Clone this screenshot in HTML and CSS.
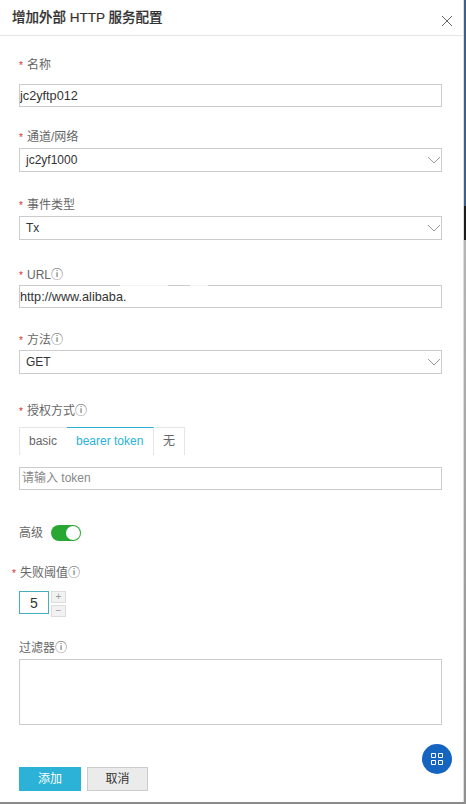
FILE: index.html
```html
<!DOCTYPE html>
<html lang="zh-CN">
<head>
  <meta charset="UTF-8">
  <title>增加外部 HTTP 服务配置</title>
  <link rel="stylesheet" href="styles.css">
</head>
<body>
  <div class="backdrop">
    <div class="drawer">
      <div class="drawer-header">
        <h2 class="heading">增加外部 HTTP 服务配置</h2>
        <svg class="close-icon" width="12" height="12" viewBox="0 0 12 12"><path d="M1 1l10 10M11 1L1 11" stroke="#666" fill="none"/></svg>
      </div>
      <form class="drawer-body">
        <label class="form-label name-label"><span class="req">*</span>名称</label>
        <input type="text" class="form-input" value="jc2yftp012">

        <label class="form-label channel-label"><span class="req">*</span>通道/网络</label>
        <div class="form-select">jc2yf1000<svg class="caret" width="14" height="8" viewBox="0 0 14 8"><path d="M1 1l6 6 6-6" stroke="#999" fill="none"/></svg></div>

        <label class="form-label event-label"><span class="req">*</span>事件类型</label>
        <div class="form-select">Tx<svg class="caret" width="14" height="8" viewBox="0 0 14 8"><path d="M1 1l6 6 6-6" stroke="#999" fill="none"/></svg></div>

        <label class="form-label url-label"><span class="req">*</span>URL<span class="info">ⓘ</span></label>
        <div class="url-field">
          <input type="text" class="form-input" value="http://www.alibaba.">
          <span class="smudge smudge-left"></span>
          <span class="smudge smudge-right"></span>
        </div>

        <label class="form-label method-label"><span class="req">*</span>方法<span class="info">ⓘ</span></label>
        <div class="form-select">GET<svg class="caret" width="14" height="8" viewBox="0 0 14 8"><path d="M1 1l6 6 6-6" stroke="#999" fill="none"/></svg></div>

        <label class="form-label auth-label"><span class="req">*</span>授权方式<span class="info">ⓘ</span></label>
        <div class="tabs">
          <div class="tab tab-basic">basic</div>
          <div class="tab tab-active">bearer token</div>
          <div class="tab tab-none">无</div>
        </div>
        <input type="text" class="form-input token-input" placeholder="请输入 token">

        <div class="advanced">
          <span class="advanced-label">高级</span>
          <span class="switch"><span class="switch-knob"></span></span>
        </div>

        <label class="form-label threshold-label"><span class="req">*</span>失败阈值<span class="info">ⓘ</span></label>
        <div class="stepper">
          <div class="stepper-value">5</div>
          <div class="stepper-buttons">
            <div class="stepper-btn">+</div>
            <div class="stepper-btn">−</div>
          </div>
        </div>

        <label class="form-label filter-label">过滤器<span class="info">ⓘ</span></label>
        <div class="form-textarea"></div>

        <div class="actions">
          <button type="button" class="btn btn-primary">添加</button>
          <button type="button" class="btn btn-default">取消</button>
        </div>
      </form>
      <div class="fab">
        <svg width="12" height="12" viewBox="0 0 12 12"><path d="M.5.500h4v4h-4zM7.500.500h4v4h-4zM.5 7.500h4v4h-4zM7.500 7.500h4v4h-4z" stroke="#fff" fill="none"/></svg>
      </div>
    </div>
    <div class="page-edge"></div>
  </div>
</body>
</html>
```

FILE: styles.css
```css
* {
  box-sizing: border-box;
}

html, body {
  margin: 0;
  height: 100%;
  overflow: hidden;
}

body {
  font-family: "Liberation Sans", "Noto Sans CJK SC", sans-serif;
  font-size: 12px;
  color: #333;
}

.backdrop {
  display: flex;
  height: 804px;
  background: #8a8a8a;
}

.drawer {
  position: relative;
  flex: none;
  width: 464px;
  height: 802px;
  background: #fff;
  border-right: 1px solid #ddd;
}

.page-edge {
  flex: 1;
  background: linear-gradient(#3f5f86 0, #3f5f86 206px, #1c1c1c 206px, #1c1c1c 240px, #b5b5b5 240px, #8f8f8f 100%);
}

.drawer-header {
  display: flex;
  justify-content: space-between;
  height: 36px;
  padding: 9px 10px 0 12px;
  border-bottom: 1px solid #e6e6e6;
}

.heading {
  margin: 0;
  font-size: 13.5px;
  line-height: 18px;
  font-weight: 500;
  color: #333;
  -webkit-text-stroke: 0.2px #333;
}

.close-icon {
  margin-top: 6px;
}

.drawer-body {
  padding: 20px 21px 0 19px;
}

.form-label {
  display: block;
  height: 16px;
  font-size: 12px;
  line-height: 18px;
  color: #666;
}

.req {
  display: inline-block;
  width: 8px;
  color: #d93026;
  font-size: 10px;
}

.info {
  font-size: 12px;
  color: #555;
}

.form-input, .form-select, .form-textarea {
  display: block;
  width: 423px;
  background: #fff;
  border: 1px solid #ccc;
  font-family: inherit;
  font-size: 12px;
  color: #333;
}

.form-input {
  height: 23px;
  padding: 0;
  font-size: 12.7px;
  outline: none;
}

.form-input::placeholder {
  color: #888;
}

.form-select {
  position: relative;
  height: 24px;
  padding: 0 6px;
  line-height: 22px;
}

.caret {
  position: absolute;
  right: 0;
  top: 7px;
}

.form-textarea {
  height: 66px;
}

.name-label { margin-bottom: 12px; }
.channel-label { margin-top: 21px; margin-bottom: 4px; }
.event-label { margin-top: 24px; margin-bottom: 4px; }
.url-label { margin-top: 26px; margin-bottom: 3px; }
.method-label { margin-top: 23px; margin-bottom: 3px; }
.auth-label { margin-top: 28px; margin-bottom: 9px; }
.threshold-label { margin-top: 22px; margin-bottom: 11px; margin-left: -7px; }
.filter-label { margin-top: 22px; margin-bottom: 4px; }

.url-field {
  position: relative;
}

.smudge {
  position: absolute;
  top: 0;
  height: 1px;
  background: #f4f4f4;
}

.smudge-left {
  left: 101px;
  width: 48px;
}

.smudge-right {
  left: 171px;
  width: 18px;
}

.tabs {
  display: flex;
  height: 28px;
}

.tab {
  height: 28px;
  line-height: 26px;
  border-top: 1px solid #e6e6e6;
  font-size: 12px;
  color: #666;
}

.tab-basic {
  width: 48px;
  padding-left: 9px;
  border-left: 1px solid #e6e6e6;
}

.tab-active {
  width: 87px;
  padding-left: 9px;
  color: #2bb2d6;
  border-top-color: #2bb2d6;
  border-right: 1px solid #e6e6e6;
}

.tab-none {
  width: 31px;
  padding-left: 9px;
  border-right: 1px solid #e6e6e6;
}

.token-input {
  margin-top: 12px;
  padding: 0 2px 2px;
  font-size: 12px;
}

.advanced {
  display: flex;
  align-items: center;
  margin-top: 34px;
  height: 18px;
}

.advanced-label {
  width: 32px;
  padding-bottom: 3px;
  color: #666;
}

.switch {
  position: relative;
  width: 30px;
  height: 16px;
  background: #28a832;
  border-radius: 8px;
}

.switch-knob {
  position: absolute;
  right: 1px;
  top: 1px;
  width: 14px;
  height: 14px;
  background: #fff;
  border-radius: 50%;
}

.stepper {
  display: flex;
  gap: 2px;
}

.stepper-value {
  width: 30px;
  height: 23px;
  border: 1px solid #45aebf;
  text-align: center;
  line-height: 23px;
  font-size: 14px;
}

.stepper-buttons {
  display: flex;
  flex-direction: column;
  gap: 2px;
}

.stepper-btn {
  width: 15px;
  height: 12px;
  background: #f2f2f2;
  border: 1px solid #ddd;
  color: #999;
  font-size: 10px;
  line-height: 10px;
  text-align: center;
}

.actions {
  display: flex;
  gap: 6px;
  margin-top: 42px;
}

.btn {
  height: 24px;
  padding: 0 0 3px;
  font-family: inherit;
  font-size: 12px;
  border: 1px solid transparent;
}

.btn-primary {
  width: 62px;
  background: #2bb2d6;
  color: #fff;
}

.btn-default {
  width: 61px;
  background: #ebebeb;
  border-color: #ccc;
  color: #333;
}

.fab {
  position: absolute;
  left: 422px;
  top: 744px;
  display: flex;
  align-items: center;
  justify-content: center;
  width: 30px;
  height: 30px;
  background: #1565c0;
  border-radius: 50%;
}
```
